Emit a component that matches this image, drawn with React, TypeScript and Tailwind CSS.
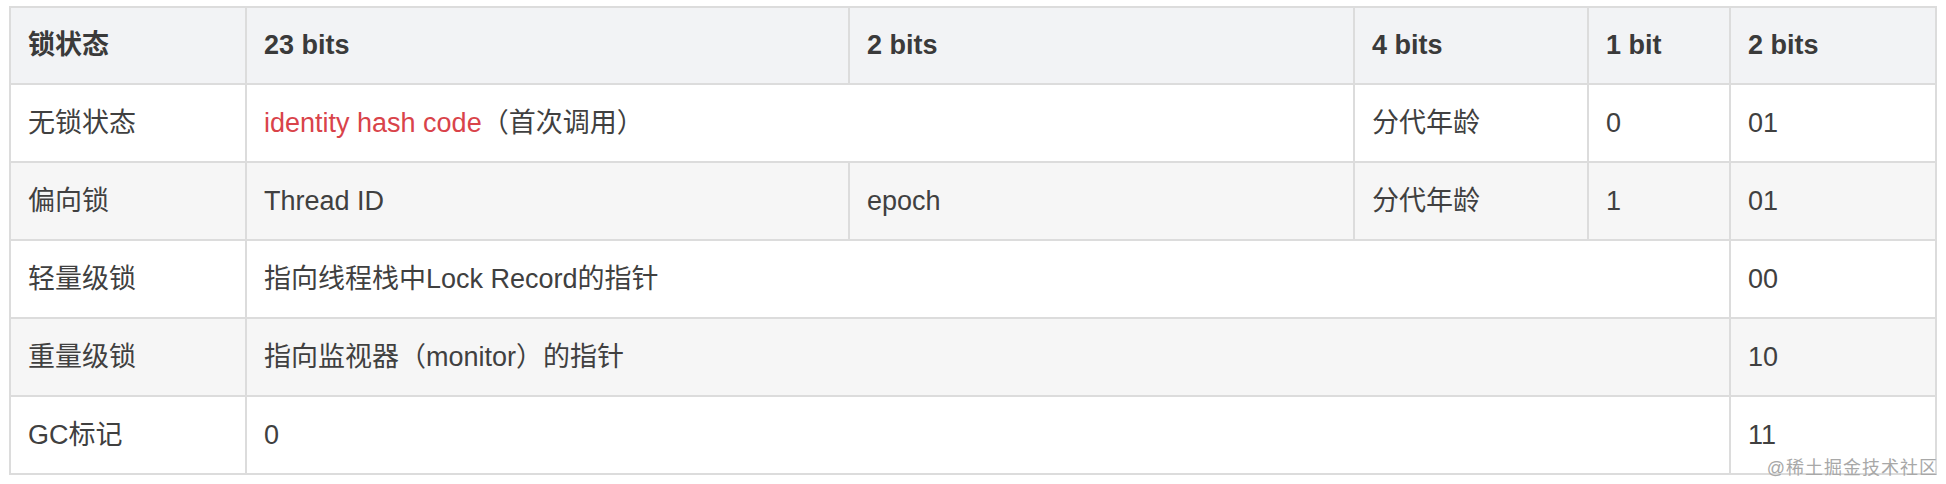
import React from "react";

type Cell = { text: React.ReactNode; span?: number };

const font = { fontFamily: '"Liberation Sans", "Noto Sans CJK SC", sans-serif' };

const header = ["锁状态", "23 bits", "2 bits", "4 bits", "1 bit", "2 bits"];

const rows: Cell[][] = [
  [
    { text: "无锁状态" },
    {
      text: (
        <>
          <span className="text-[#d9434a]">identity hash code</span>（首次调用）
        </>
      ),
      span: 2,
    },
    { text: "分代年龄" },
    { text: "0" },
    { text: "01" },
  ],
  [
    { text: "偏向锁" },
    { text: "Thread ID" },
    { text: "epoch" },
    { text: "分代年龄" },
    { text: "1" },
    { text: "01" },
  ],
  [{ text: "轻量级锁" }, { text: "指向线程栈中Lock Record的指针", span: 4 }, { text: "00" }],
  [{ text: "重量级锁" }, { text: "指向监视器（monitor）的指针", span: 4 }, { text: "10" }],
  [{ text: "GC标记" }, { text: "0", span: 4 }, { text: "11" }],
];

export default function App() {
  return (
    <div className="relative w-[1946px] h-[484px] bg-white overflow-hidden" style={font}>
      <div className="pt-[6px] pl-[9px]">
        <table className="table-fixed border-collapse w-[1926px] text-[27px] text-[#404040]">
          <colgroup>
            <col className="w-[236px]" />
            <col className="w-[603px]" />
            <col className="w-[505px]" />
            <col className="w-[234px]" />
            <col className="w-[142px]" />
            <col className="w-[206px]" />
          </colgroup>
          <thead>
            <tr className="h-[77px] bg-[#f2f3f5]">
              {header.map((h, i) => (
                <th
                  key={i}
                  className="border-2 border-[#dcdcdc] px-[17px] text-left font-bold text-[#3a3a3a]"
                >
                  {h}
                </th>
              ))}
            </tr>
          </thead>
          <tbody>
            {rows.map((r, ri) => (
              <tr key={ri} className={ri % 2 === 1 ? "h-[78px] bg-[#f6f6f6]" : "h-[78px] bg-white"}>
                {r.map((c, ci) => (
                  <td
                    key={ci}
                    colSpan={c.span}
                    className="border-2 border-[#dcdcdc] px-[17px] text-left font-normal"
                  >
                    {c.text}
                  </td>
                ))}
              </tr>
            ))}
          </tbody>
        </table>
      </div>
      {/* watermark */}
      <div className="absolute right-[8px] bottom-[7px] text-[18px] leading-none text-[#a8a8a8] tracking-[1px]">
        @稀土掘金技术社区
      </div>
    </div>
  );
}
